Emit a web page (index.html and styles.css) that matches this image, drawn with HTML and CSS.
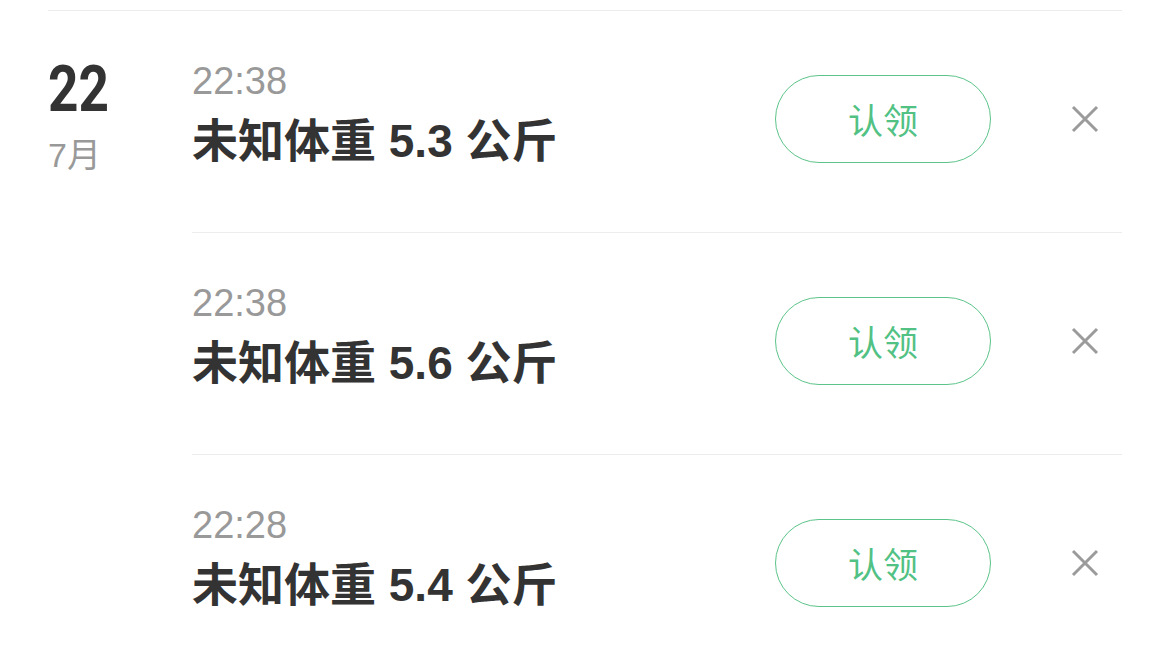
FILE: index.html
```html
<!DOCTYPE html>
<html>
<head>
  <title>未认领体重</title>
  <link rel="stylesheet" href="styles.css">
</head>
<body>
  <div id="record-list">
    <div class="day-group">
      <div class="date-col">
        <div class="day">22</div>
        <div class="month">7月</div>
      </div>
      <div class="entries">
        <div class="entry">
          <div class="info">
            <div class="time">22:38</div>
            <div class="title">未知体重 5.3 公斤</div>
          </div>
          <button class="claim-button">认领</button>
          <button class="close-button" aria-label="删除">
            <svg width="28" height="28" viewBox="0 0 28 28"><path d="M2 2 L26 26 M26 2 L2 26" stroke="#9b9b9b" stroke-width="3" fill="none"/></svg>
          </button>
        </div>
        <div class="entry">
          <div class="info">
            <div class="time">22:38</div>
            <div class="title">未知体重 5.6 公斤</div>
          </div>
          <button class="claim-button">认领</button>
          <button class="close-button" aria-label="删除">
            <svg width="28" height="28" viewBox="0 0 28 28"><path d="M2 2 L26 26 M26 2 L2 26" stroke="#9b9b9b" stroke-width="3" fill="none"/></svg>
          </button>
        </div>
        <div class="entry">
          <div class="info">
            <div class="time">22:28</div>
            <div class="title">未知体重 5.4 公斤</div>
          </div>
          <button class="claim-button">认领</button>
          <button class="close-button" aria-label="删除">
            <svg width="28" height="28" viewBox="0 0 28 28"><path d="M2 2 L26 26 M26 2 L2 26" stroke="#9b9b9b" stroke-width="3" fill="none"/></svg>
          </button>
        </div>
      </div>
    </div>
  </div>
</body>
</html>
```

FILE: styles.css
```css
body {
  margin: 0;
  background-color: #fff;
  font-family: 'Liberation Sans', 'Noto Sans CJK SC', sans-serif;
  color: #333;
  overflow: hidden;
}

#record-list {
  padding: 10px 48px 0 48px;
}

.day-group {
  display: flex;
  border-top: 1px solid #ececec;
}

.date-col {
  width: 144px;
  padding-top: 47px;
}

/* no condensed face installed, so squeeze a bold one */
.day {
  font-family: 'Roboto', sans-serif;
  font-weight: 700;
  font-size: 64px;
  line-height: 64px;
  color: #333;
  transform: scaleX(0.83);
  transform-origin: left center;
}

.month {
  font-size: 34px;
  line-height: 40px;
  margin-top: 13px;
  color: #999;
}

.entries {
  flex: 1;
}

.entry {
  display: flex;
  align-items: flex-start;
  height: 221px;
  padding-top: 47px;
  box-sizing: border-box;
}

.entry + .entry {
  height: 222px;
  border-top: 1px solid #ececec;
}

.info {
  flex: 1;
}

.time {
  font-size: 38px;
  line-height: 46px;
  color: #999;
}

.title {
  font-weight: 700;
  font-size: 46px;
  line-height: 60px;
  margin-top: 7px;
  color: #333;
}

.claim-button {
  width: 216px;
  height: 88px;
  margin-top: 17px;
  padding-bottom: 3px;
  border: 1.5px solid #5cc48a;
  border-radius: 44px;
  background: #fff;
  color: #52c184;
  font-family: 'Noto Sans CJK SC', sans-serif;
  font-size: 35px;
  cursor: pointer;
}

.close-button {
  width: 74px;
  height: 88px;
  margin-top: 17px;
  margin-left: 57px;
  padding: 0;
  border: none;
  background: none;
  display: flex;
  justify-content: center;
  align-items: center;
  cursor: pointer;
}
```
